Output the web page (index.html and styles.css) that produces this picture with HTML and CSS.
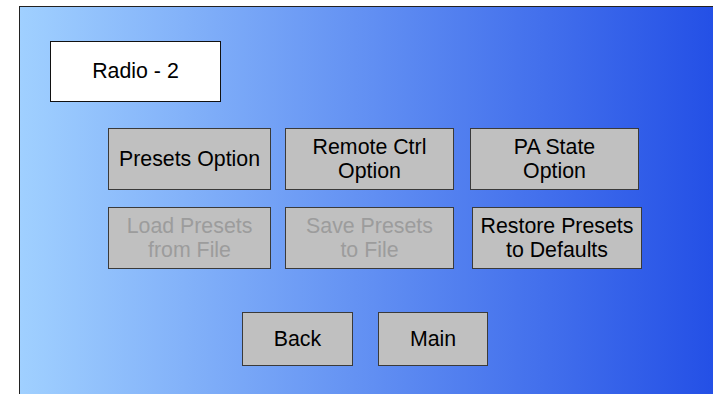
FILE: index.html
```html
<!DOCTYPE html>
<html>
<head>
<meta charset="utf-8">
<link rel="stylesheet" href="styles.css">
</head>
<body>
<div class="frame">
  <div class="title">Radio - 2</div>
  <div class="row row1">
    <div class="btn w163">Presets Option</div>
    <div class="btn w169 ml15">Remote Ctrl<br>Option</div>
    <div class="btn w169 ml16">PA State<br>Option</div>
  </div>
  <div class="row row2">
    <div class="btn w163 disabled">Load Presets<br>from File</div>
    <div class="btn w169 ml15 disabled">Save Presets<br>to File</div>
    <div class="btn w170 ml18">Restore Presets<br>to Defaults</div>
  </div>
  <div class="row row3">
    <div class="btn nav w111">Back</div>
    <div class="btn nav w110 ml25">Main</div>
  </div>
</div>
</body>
</html>
```

FILE: styles.css
```css
html, body {
  margin: 0;
  padding: 0;
  background: #ffffff;
  width: 713px;
  height: 394px;
  overflow: hidden;
}
.frame {
  box-sizing: border-box;
  margin-left: 19px;
  margin-top: 6px;
  width: 694px;
  height: 388px;
  border-left: 1px solid #222;
  border-top: 1px solid #222;
  background: linear-gradient(to right, #a0d0ff 0%, #2450e6 100%);
  display: flex;
  flex-direction: column;
  padding-top: 34px;
  padding-left: 30px;
  font-family: "Liberation Sans", Arial, sans-serif;
  font-size: 21.33px;
  color: #000;
}
.title {
  box-sizing: border-box;
  width: 171px;
  height: 61px;
  background: #fff;
  border: 1px solid #111;
  display: flex;
  align-items: center;
  justify-content: center;
}
.row {
  display: flex;
  padding-left: 58px;
}
.row1 { margin-top: 26px; }
.row2 { margin-top: 17px; }
.row3 { margin-top: 43px; padding-left: 192px; }
.btn {
  box-sizing: border-box;
  height: 62px;
  background: #c0c0c0;
  border: 1px solid #3a3a3a;
  display: flex;
  align-items: center;
  justify-content: center;
  text-align: center;
  line-height: 24.5px;
}
.btn.nav { height: 54px; }
.disabled { color: #9c9c9c; }
.w163 { width: 163px; }
.w169 { width: 169px; }
.w170 { width: 170px; }
.w111 { width: 111px; }
.w110 { width: 110px; }
.ml15 { margin-left: 14px; }
.ml16 { margin-left: 16px; }
.ml18 { margin-left: 18px; }
.ml25 { margin-left: 25px; }
```
